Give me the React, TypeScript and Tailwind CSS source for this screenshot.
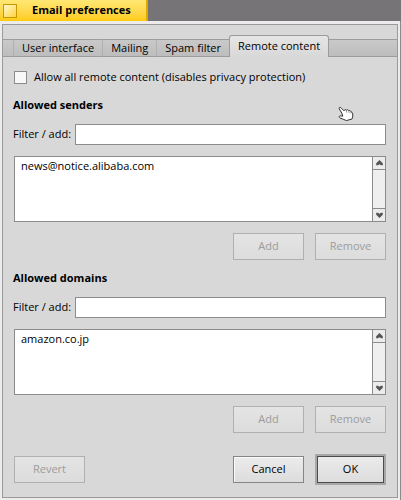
import React, { useState } from 'react';
import clsx from 'clsx';

type ButtonProps = {
  label: string;
  disabled?: boolean;
};

const PushButton: React.FC<ButtonProps> = ({ label, disabled }) => (
  <button
    type="button"
    disabled={disabled}
    className={clsx(
      'w-[71px] h-[27px] border text-center bg-linear-to-b to-[#dcdcdc]',
      disabled
        ? 'border-[#b0b0b0] text-[#9c9c9c] from-[#e4e4e4]'
        : 'border-[#858585] text-black from-[#ececec] shadow-[inset_1px_1px_0_#fafafa]'
    )}
  >
    {label}
  </button>
);

const ScrollArrow: React.FC<{ down?: boolean }> = ({ down }) => (
  <button
    type="button"
    aria-label={down ? 'Scroll down' : 'Scroll up'}
    className="h-3 w-full flex items-center justify-center bg-[#ececec]"
  >
    <svg width="7" height="6" viewBox="0 0 7 6" fill="#555" className={clsx(down && 'rotate-180')}>
      <path d="M3.5 0L6.8 3.3V5.2H5L3.5 4.2L2 5.2H.2V3.3Z" />
    </svg>
  </button>
);

type FilterSectionProps = {
  id: string;
  title: string;
  items: string[];
};

const FilterSection: React.FC<FilterSectionProps> = ({ id, title, items }) => {
  const [filter, setFilter] = useState('');

  return (
    <section>
      <h2 className="font-bold leading-4">{title}</h2>
      <div className="flex items-center gap-1 mt-[11px]">
        <label htmlFor={id} className="w-[58px] whitespace-nowrap">Filter / add:</label>
        <input
          id={id}
          type="text"
          value={filter}
          onChange={(e) => setFilter(e.target.value)}
          className="flex-1 min-w-0 h-[21px] px-1 bg-white border border-[#8c8c8c] outline-none"
        />
      </div>
      <div className="flex ml-px mt-[11px] h-[66px] bg-white border border-[#8c8c8c]">
        <ul className="flex-1 min-w-0 px-1.5 py-px">
          {items.map((item) => <li key={item} className="leading-4">{item}</li>)}
        </ul>
        <div className="w-[13px] flex flex-col border-l border-[#8c8c8c]">
          <ScrollArrow />
          <div className="flex-1 border-y border-[#8c8c8c] bg-[#efefef]" />
          <ScrollArrow down />
        </div>
      </div>
      <div className="flex justify-end gap-[11px] mt-[11px]">
        <PushButton label="Add" disabled />
        <PushButton label="Remove" disabled />
      </div>
    </section>
  );
};

const tabs = ['User interface', 'Mailing', 'Spam filter', 'Remote content'];

export default function App() {
  const [activeTab, setActiveTab] = useState('Remote content');
  const [allowAll, setAllowAll] = useState(false);

  return (
    <div className="relative bg-[#777477] text-black text-[11px] font-['Open_Sans','Noto_Sans',sans-serif]">
      {/* Title tab */}
      <header className="w-[148px] h-[21px] flex items-center gap-[15px] pl-[3px] border-r-2 border-[#dfa800] bg-linear-to-b from-[#ffe873] to-[#ffcb08]">
        <button
          type="button"
          aria-label="Close"
          className="size-3.5 border border-[#c99700] bg-linear-to-br from-[#fff7c4] to-[#ffd22e]"
        />
        <h1 className="font-bold whitespace-nowrap">Email preferences</h1>
      </header>

      {/* Window frame */}
      <div className="pl-0.5 pt-[3px] pr-0.5 pb-0.5 bg-[#ececec] border-r border-b border-[#8a8a8a]">
        <div className="border border-[#9a9a9a] bg-[#d8d8d8] pt-2.5">
          <nav role="tablist" className="flex items-end h-[22px]">
            <div className="w-2.5 h-[18px] border-y border-[#9c9c9c] bg-linear-to-b from-[#c9c9c9] to-[#bdbdbd]" />
            {tabs.map((tab) => (
              <button
                key={tab}
                type="button"
                role="tab"
                aria-selected={tab === activeTab}
                onClick={() => setActiveTab(tab)}
                className={clsx(
                  'px-2 whitespace-nowrap border-[#9c9c9c] bg-linear-to-b',
                  tab === activeTab
                    ? 'h-[22px] border-t border-x rounded-t-[3px] from-[#e6e6e6] to-[#d8d8d8]'
                    : 'h-[18px] border-y border-l border-l-[#b0b0b0] from-[#c9c9c9] to-[#bdbdbd]'
                )}
              >
                {tab}
              </button>
            ))}
            <div className="flex-1 h-[18px] border-y border-[#9c9c9c] bg-linear-to-b from-[#c9c9c9] to-[#bdbdbd]" />
          </nav>

          <main className="pl-2.5 pr-[11px] pt-3 pb-3">
            <label className="flex items-center gap-[7px] ml-px leading-4 mb-3">
              <input
                type="checkbox"
                checked={allowAll}
                onChange={(e) => setAllowAll(e.target.checked)}
                className="appearance-none size-[13px] border border-[#8c8c8c] bg-[#f8f8f8] checked:bg-[#2a4a8a]"
              />
              Allow all remote content (disables privacy protection)
            </label>

            <div className="flex flex-col gap-2.5">
              <FilterSection id="senders-filter" title="Allowed senders" items={['news@notice.alibaba.com']} />
              <FilterSection id="domains-filter" title="Allowed domains" items={['amazon.co.jp']} />
            </div>

            <footer className="flex items-center gap-[11px] ml-px mt-[21px]">
              <PushButton label="Revert" disabled />
              <div className="flex-1" />
              <PushButton label="Cancel" />
              <button
                type="button"
                className="w-[71px] h-[31px] border-2 border-[#a8a8a8] bg-linear-to-b from-[#ececec] to-[#dcdcdc] shadow-[inset_0_0_0_1px_#4c4c4c]"
              >
                OK
              </button>
            </footer>
          </main>
        </div>
      </div>

      {/* Hand pointer */}
      <svg className="absolute left-[338px] top-[106px] pointer-events-none" width="16" height="16" viewBox="0 0 16 16">
        <path
          d="M1.2 2.8C.6 1.4 2.2 .8 3 1.8L6 4.8C6.2 3.6 7.8 3.4 8.4 4.2C9 3.4 10.4 3.6 10.8 4.6C11.8 4.2 12.8 4.8 13 5.8C14.2 6 14.8 7.4 14.8 9C14.8 10.6 14.6 12 14 13L8.4 14.6C6.4 13.6 4 12.8 2 12C.8 11.2 1 10 2.2 9.8L4.8 10.2L3.8 7Z"
          fill="#fff"
          stroke="#333"
        />
        <path d="M8.4 4.4L8.8 6.6M10.8 4.8L11.1 6.8M13 5.8V7.4" stroke="#666" strokeWidth=".7" fill="none" />
      </svg>
    </div>
  );
}
